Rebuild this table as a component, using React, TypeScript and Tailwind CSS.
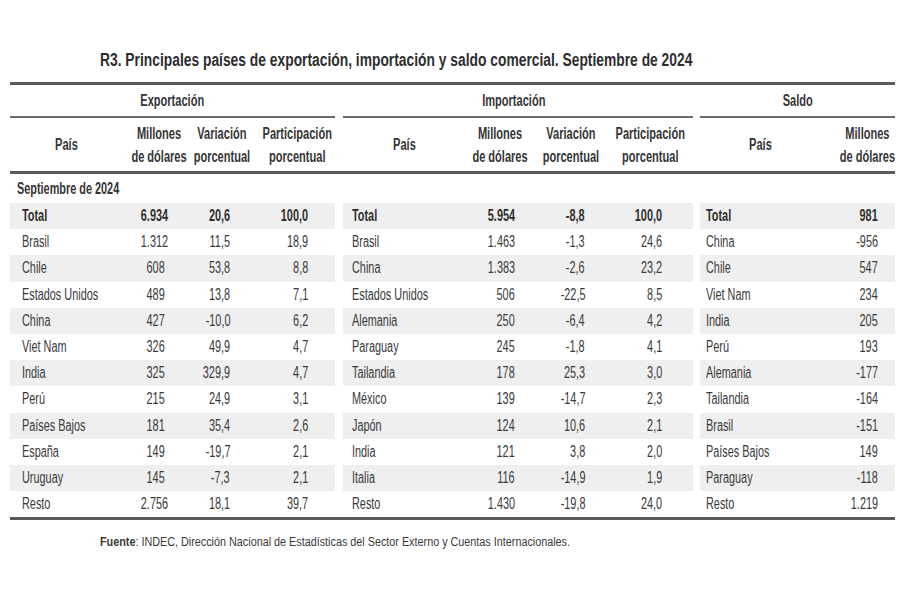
import React from 'react';

type Row = [string, string, string, string];

const exportRows: Row[] = [
  ['Total', '6.934', '20,6', '100,0'],
  ['Brasil', '1.312', '11,5', '18,9'],
  ['Chile', '608', '53,8', '8,8'],
  ['Estados Unidos', '489', '13,8', '7,1'],
  ['China', '427', '-10,0', '6,2'],
  ['Viet Nam', '326', '49,9', '4,7'],
  ['India', '325', '329,9', '4,7'],
  ['Perú', '215', '24,9', '3,1'],
  ['Países Bajos', '181', '35,4', '2,6'],
  ['España', '149', '-19,7', '2,1'],
  ['Uruguay', '145', '-7,3', '2,1'],
  ['Resto', '2.756', '18,1', '39,7'],
];

const importRows: Row[] = [
  ['Total', '5.954', '-8,8', '100,0'],
  ['Brasil', '1.463', '-1,3', '24,6'],
  ['China', '1.383', '-2,6', '23,2'],
  ['Estados Unidos', '506', '-22,5', '8,5'],
  ['Alemania', '250', '-6,4', '4,2'],
  ['Paraguay', '245', '-1,8', '4,1'],
  ['Tailandia', '178', '25,3', '3,0'],
  ['México', '139', '-14,7', '2,3'],
  ['Japón', '124', '10,6', '2,1'],
  ['India', '121', '3,8', '2,0'],
  ['Italia', '116', '-14,9', '1,9'],
  ['Resto', '1.430', '-19,8', '24,0'],
];

const saldoRows: [string, string][] = [
  ['Total', '981'],
  ['China', '-956'],
  ['Chile', '547'],
  ['Viet Nam', '234'],
  ['India', '205'],
  ['Perú', '193'],
  ['Alemania', '-177'],
  ['Tailandia', '-164'],
  ['Brasil', '-151'],
  ['Países Bajos', '149'],
  ['Paraguay', '-118'],
  ['Resto', '1.219'],
];

// the source uses a very narrow face, so squeeze Liberation Sans horizontally
const L = ({ children }: { children: React.ReactNode }) => (
  <span className="inline-block whitespace-nowrap scale-x-[0.68] origin-left">{children}</span>
);
const R = ({ children }: { children: React.ReactNode }) => (
  <span className="inline-block whitespace-nowrap scale-x-[0.68] origin-right">{children}</span>
);
const C = ({ children }: { children: React.ReactNode }) => (
  <span className="inline-block whitespace-nowrap text-center scale-x-[0.69] origin-center">{children}</span>
);

const Line = () => <div className="h-[3px] bg-[#5a5a5a]" />;

const rowCls = (i: number) =>
  `h-[26.2px] items-center ${i % 2 === 0 ? 'bg-[#efefef]' : ''} ${i === 0 ? 'font-bold text-[#2e2e2e]' : ''}`;

const App: React.FC = () => {
  return (
    <div className="w-[900px] h-[600px] overflow-hidden bg-white font-['Liberation_Sans',Arial,sans-serif] text-[#3a3a3a]">
      <div className="mt-[48px] h-[24px] leading-[24px] pl-[100px] text-[18px] font-bold text-[#2e2e2e]">
        <span className="inline-block whitespace-nowrap scale-x-[0.768] origin-left">
          R3. Principales países de exportación, importación y saldo comercial. Septiembre de 2024
        </span>
      </div>

      <div className="ml-[10px] w-[885px] mt-[10px]">
        <Line />

        {/* encabezados */}
        <div className="flex font-bold text-[16px] text-[#353535]">
          <div className="w-[325px]">
            <div className="h-[31px] flex items-center justify-center"><C>Exportación</C></div>
            <div className="h-[2px] bg-[#6a6a6a]" />
            <div className="grid grid-cols-[118px_62px_63px_82px] h-[53px] items-center leading-[23px]">
              <div className="flex justify-center pr-[6px]"><C>País</C></div>
              <div className="flex justify-center"><C>Millones<br />de dólares</C></div>
              <div className="flex justify-center"><C>Variación<br />porcentual</C></div>
              <div className="flex justify-center pl-[6px]"><C>Participación<br />porcentual</C></div>
            </div>
          </div>
          <div className="w-[8px]" />
          <div className="w-[350px]">
            <div className="h-[31px] flex items-center justify-center pr-[8px]"><C>Importación</C></div>
            <div className="h-[2px] bg-[#6a6a6a]" />
            <div className="grid grid-cols-[122px_70px_72px_86px] h-[53px] items-center leading-[23px]">
              <div className="flex justify-center"><C>País</C></div>
              <div className="flex justify-center"><C>Millones<br />de dólares</C></div>
              <div className="flex justify-center"><C>Variación<br />porcentual</C></div>
              <div className="flex justify-center"><C>Participación<br />porcentual</C></div>
            </div>
          </div>
          <div className="w-[7px]" />
          <div className="w-[195px]">
            <div className="h-[31px] flex items-center justify-center"><C>Saldo</C></div>
            <div className="h-[2px] bg-[#6a6a6a]" />
            <div className="grid grid-cols-[120px_75px] h-[53px] items-center leading-[23px]">
              <div className="flex justify-center"><C>País</C></div>
              <div className="flex justify-end">
                <span className="inline-block whitespace-nowrap text-center scale-x-[0.69] origin-right">
                  Millones<br />de dólares
                </span>
              </div>
            </div>
          </div>
        </div>

        <Line />

        <div className="h-[29px] leading-[29px] pl-[7px] font-bold text-[16px] text-[#353535]">
          <L>Septiembre de 2024</L>
        </div>

        {/* cuerpo */}
        <div className="flex text-[16px]">
          <div className="w-[325px]">
            {exportRows.map((r, i) => (
              <div key={r[0]} className={`grid grid-cols-[118px_62px_63px_82px] ${rowCls(i)}`}>
                <div className="pl-[12px]"><L>{r[0]}</L></div>
                <div className="text-right pr-[25px]"><R>{r[1]}</R></div>
                <div className="text-right pr-[23px]"><R>{r[2]}</R></div>
                <div className="text-right pr-[27px]"><R>{r[3]}</R></div>
              </div>
            ))}
          </div>
          <div className="w-[8px]" />
          <div className="w-[350px]">
            {importRows.map((r, i) => (
              <div key={r[0]} className={`grid grid-cols-[122px_70px_72px_86px] ${rowCls(i)}`}>
                <div className="pl-[9px]"><L>{r[0]}</L></div>
                <div className="text-right pr-[20px]"><R>{r[1]}</R></div>
                <div className="text-right pr-[22px]"><R>{r[2]}</R></div>
                <div className="text-right pr-[31px]"><R>{r[3]}</R></div>
              </div>
            ))}
          </div>
          <div className="w-[7px]" />
          <div className="w-[195px]">
            {saldoRows.map((r, i) => (
              <div key={r[0]} className={`grid grid-cols-[120px_75px] ${rowCls(i)}`}>
                <div className="pl-[6px]"><L>{r[0]}</L></div>
                <div className="text-right pr-[17px]"><R>{r[1]}</R></div>
              </div>
            ))}
          </div>
        </div>

        <Line />
      </div>

      <div className="mt-[14px] h-[16px] leading-[16px] pl-[100px] text-[12px] text-[#3a3a3a]">
        <span className="inline-block whitespace-nowrap scale-x-[0.9] origin-left">
          <span className="font-bold">Fuente</span>: INDEC, Dirección Nacional de Estadísticas del Sector Externo y Cuentas Internacionales.
        </span>
      </div>
    </div>
  );
};

export default App;
